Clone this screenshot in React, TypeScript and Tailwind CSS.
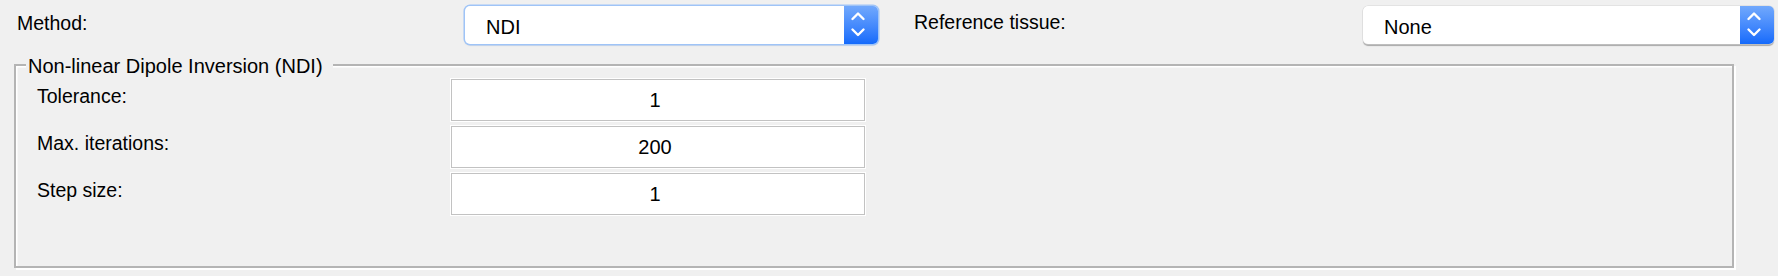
const font = { fontFamily: '"Liberation Sans", Arial, Helvetica, sans-serif' };

function Chevrons() {
  return (
    <svg width="34" height="38" viewBox="0 0 34 38" fill="none">
      <polyline points="8.5,13 14,7.5 19.5,13" stroke="white" strokeWidth="2.4" strokeLinecap="round" strokeLinejoin="round" />
      <polyline points="8.5,23.5 14,29 19.5,23.5" stroke="white" strokeWidth="2.4" strokeLinecap="round" strokeLinejoin="round" />
    </svg>
  );
}

function Select({ value, focused, width }: { value: string; focused?: boolean; width: string }) {
  return (
    <div
      className={`${width} h-[38px] flex rounded-[5px] bg-white ${
        focused
          ? "shadow-[0_0_0_1.5px_#9fc4f7,0_1px_2px_rgba(0,0,0,0.25)]"
          : "shadow-[0_0_0_0.5px_#d6d6d6,0_1.5px_1px_rgba(0,0,0,0.3)]"
      }`}
    >
      <div className="flex-1 flex items-center pl-[21px] pt-[3px] text-[20px] text-black">{value}</div>
      <div className="w-[34px] h-full rounded-r-[5px] bg-gradient-to-b from-[#71a8fc] to-[#136afb] flex items-center justify-center">
        <Chevrons />
      </div>
    </div>
  );
}

function Field({ label, value }: { label: string; value: string }) {
  return (
    <div className="flex items-start">
      <div className="w-[414px] mt-[5px] leading-[24px] text-[19.5px] text-black">{label}</div>
      <div className="w-[414px] h-[42px] bg-white border border-[#c2c2c2] shadow-[0_0_0_1px_white] flex items-center justify-center pr-[6px] text-[20px] text-black">
        {value}
      </div>
    </div>
  );
}

export default function App() {
  return (
    <div className="w-[1778px] h-[276px] bg-[#f0f0f0] overflow-hidden" style={font}>
      {/* Top row */}
      <div className="flex items-start pt-[6px] pl-[17px]">
        <div className="w-[448px] mt-[5px] leading-[24px] text-[19.5px] text-black">Method:</div>
        <Select value="NDI" focused width="w-[413px]" />
        <div className="w-[449px] ml-[36px] mt-[4px] leading-[24px] text-[19.5px] text-black">Reference tissue:</div>
        <Select value="None" width="w-[411px]" />
      </div>

      {/* NDI group */}
      <div className="relative ml-[14px] mt-[20px] w-[1720px] h-[204px] border-2 border-[#b4b4b4] shadow-[2px_2px_0_white,inset_1.5px_1.5px_0_white]">
        <div className="absolute left-[10px] top-[-12px] pl-[2px] pr-[10px] bg-[#f0f0f0] leading-[24px] text-[20px] text-black">
          Non-linear Dipole Inversion (NDI)
        </div>
        <div className="flex flex-col gap-[5px] pt-[13px] pl-[21px]">
          <Field label="Tolerance:" value="1" />
          <Field label="Max. iterations:" value="200" />
          <Field label="Step size:" value="1" />
        </div>
      </div>
    </div>
  );
}
